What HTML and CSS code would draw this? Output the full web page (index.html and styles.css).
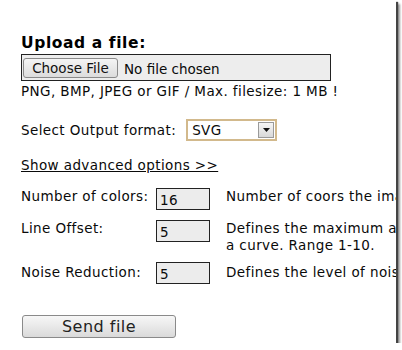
FILE: index.html
```html
<!DOCTYPE html>
<html>
<head>
<meta charset="utf-8">
<link rel="stylesheet" href="styles.css">
</head>
<body>
<div class="frame">
  <h1 class="title">Upload a file:</h1>
  <div class="filebox">
    <span class="choose">Choose File</span>
    <span class="nofile">No file chosen</span>
  </div>
  <p class="hint">PNG, BMP, JPEG or GIF / Max. filesize: 1 MB !</p>
  <div class="format-row">
    <span class="format-label">Select Output format:</span>
    <div class="select">
      <span class="select-value">SVG</span>
      <span class="select-arrow"><svg width="7" height="4" viewBox="0 0 7 4"><path d="M0 0h7L3.5 4z" fill="#111"/></svg></span>
    </div>
  </div>
  <a class="advanced">Show advanced options &gt;&gt;</a>
  <div class="opt opt-1">
    <span class="opt-label">Number of colors:</span>
    <span class="opt-input">16</span>
    <span class="opt-desc">Number of coors the image will be reduced to.</span>
  </div>
  <div class="opt opt-2">
    <span class="opt-label">Line Offset:</span>
    <span class="opt-input">5</span>
    <span class="opt-desc">Defines the maximum allowed offset of<br>a curve. Range 1-10.</span>
  </div>
  <div class="opt opt-3">
    <span class="opt-label">Noise Reduction:</span>
    <span class="opt-input">5</span>
    <span class="opt-desc">Defines the level of noise reduction.</span>
  </div>
  <button class="send">Send file</button>
</div>
</body>
</html>
```
FILE: styles.css
```css
html, body {
  margin: 0;
  padding: 0;
  background: #fff;
}
.frame {
  width: 396px;
  height: 343px;
  box-sizing: border-box;
  padding: 34px 0 0 21px;
  overflow: hidden;
  background: #fff;
  box-shadow: 2px 2px 1px #444, 4px 4px 2px rgba(0,0,0,0.4);
  font-family: "DejaVu Sans", Verdana, sans-serif;
  font-size: 13.5px;
  letter-spacing: 0.4px;
  color: #0a0a0a;
}
.title {
  margin: 0;
  font-size: 15.5px;
  letter-spacing: 0.6px;
  line-height: 18px;
  font-weight: bold;
  color: #000;
}
.filebox {
  margin-top: 2px;
  width: 310px;
  height: 27px;
  box-sizing: border-box;
  border: 1px solid #222;
  background: #ededed;
  display: flex;
  align-items: center;
  padding-left: 1px;
  letter-spacing: 0;
}
.choose {
  flex-shrink: 0;
  width: 95px;
  height: 20px;
  box-sizing: border-box;
  border: 1px solid #8a8a8a;
  border-radius: 3px;
  background: linear-gradient(#f4f4f4, #dcdcdc);
  display: flex;
  align-items: center;
  justify-content: center;
  color: #111;
}
.nofile {
  margin-left: 6px;
  padding-top: 2px;
}
.hint {
  margin: 2px 0 0;
  line-height: 16px;
  white-space: nowrap;
}
.format-row {
  margin-top: 20px;
  display: flex;
  align-items: center;
  height: 22px;
}
.format-label {
  flex-shrink: 0;
  line-height: 16px;
  white-space: nowrap;
}
.select {
  flex-shrink: 0;
  margin-left: 10px;
  width: 91px;
  height: 22px;
  box-sizing: border-box;
  border: 2px solid #d2b98c;
  background: #fff;
  display: flex;
  align-items: center;
  justify-content: space-between;
  padding: 0 1px 0 4px;
}
.select-arrow {
  width: 16px;
  height: 16px;
  box-sizing: border-box;
  border: 1px solid #9a9a9a;
  background: linear-gradient(#f6f6f6, #d8d8d8);
  display: flex;
  align-items: center;
  justify-content: center;
}
.advanced {
  display: block;
  margin-top: 16px;
  line-height: 16px;
  text-decoration: underline;
  color: #0a0a0a;
  white-space: nowrap;
}
.opt {
  display: flex;
  align-items: flex-start;
  white-space: nowrap;
}
.opt-1 { margin-top: 15px; margin-bottom: 10px; }
.opt-2 { margin-bottom: 8px; }
.opt-label {
  flex-shrink: 0;
  width: 135px;
  line-height: 17px;
}
.opt-input {
  flex-shrink: 0;
  width: 54px;
  height: 22px;
  box-sizing: border-box;
  border: 1px solid #222;
  background: #ececec;
  padding: 3px 0 0 3px;
  line-height: 17px;
}
.opt-desc {
  flex-shrink: 0;
  margin-left: 16px;
  line-height: 17px;
}
.opt-3 .opt-label,
.opt-3 .opt-desc {
  padding-top: 2px;
}
.send {
  display: block;
  margin: 31px 0 0 1px;
  width: 154px;
  height: 23px;
  box-sizing: border-box;
  border: 1px solid #8a8a8a;
  border-radius: 3px;
  background: linear-gradient(#f7f7f7, #dadada);
  font-family: "DejaVu Sans", Verdana, sans-serif;
  font-size: 16px;
  letter-spacing: 0.5px;
  color: #222;
  padding: 0;
}
```
